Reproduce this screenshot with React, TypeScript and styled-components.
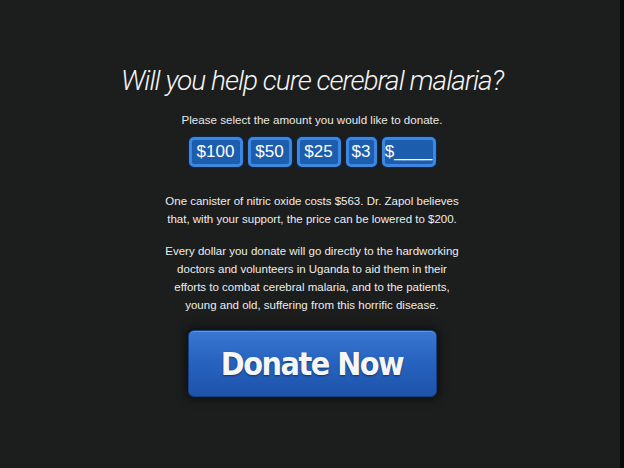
import React from "react";
import styled, { createGlobalStyle } from "styled-components";

const Global = createGlobalStyle`
  html, body { margin: 0; padding: 0; background: #1c1d1d; }
  body { width: 624px; height: 468px; overflow: hidden; }
`;

const Page = styled.div`
  width: 624px;
  height: 468px;
  box-sizing: border-box;
  background: #1c1d1d;
  box-shadow: inset -4px 0 0 #0a0a0a;
  display: flex;
  flex-direction: column;
  align-items: center;
  padding-top: 63px;
  font-family: "Liberation Sans", Arial, sans-serif;
  color: #f2f2f2;
`;

const Title = styled.h1`
  margin: 0;
  font-family: Roboto, "Liberation Sans", sans-serif;
  font-weight: 300;
  font-style: italic;
  font-size: 28px;
  line-height: 36px;
  letter-spacing: -1px;
  color: #f4f4f4;
`;

const Prompt = styled.p`
  margin: 14px 0 0;
  font-size: 11.6px;
  line-height: 14px;
  color: #e8e8e8;
`;

const Amounts = styled.div`
  display: flex;
  gap: 5px;
  margin-top: 10px;
`;

const Amount = styled.button<{ $w: number }>`
  width: ${(p) => p.$w}px;
  height: 30px;
  box-sizing: border-box;
  padding: 0;
  border: 3px solid #3b87e2;
  border-radius: 5px;
  background: #1d5dad;
  box-shadow: 0 0 0 1px #0c264a;
  color: #ffffff;
  font-family: "Liberation Sans", Arial, sans-serif;
  font-size: 17px;
  line-height: 24px;
  text-align: center;
`;

const Body = styled.div`
  margin-top: 25px;
  display: flex;
  flex-direction: column;
  gap: 14px;
  width: 320px;
`;

const Para = styled.p`
  margin: 0;
  text-align: center;
  font-size: 11.5px;
  line-height: 18px;
  color: #ededed;
`;

const Donate = styled.button`
  margin-top: 16px;
  width: 249px;
  height: 67px;
  box-sizing: border-box;
  border: 1px solid #143f85;
  border-radius: 6px;
  background: linear-gradient(#3a78d2 0%, #2764c0 45%, #1d53aa 100%);
  box-shadow: 0 0 10px 2px rgba(0, 0, 0, 0.55), inset 0 1px 0 rgba(140, 180, 240, 0.5);
  color: #f6f6f6;
  font-family: "DejaVu Sans Condensed", "Liberation Sans", sans-serif;
  font-weight: 700;
  font-size: 32px;
  letter-spacing: -1.5px;
  text-shadow: 0 1px 2px rgba(0, 0, 0, 0.45);
  padding: 0;
`;

const amounts = [
  { label: "$100", w: 54 },
  { label: "$50", w: 44 },
  { label: "$25", w: 44 },
  { label: "$3", w: 31 },
  { label: "$____", w: 54 },
];

export default function App() {
  return (
    <>
      <Global />
      <Page>
        <Title>Will you help cure cerebral malaria?</Title>
        <Prompt>Please select the amount you would like to donate.</Prompt>
        <Amounts>
          {amounts.map((a) => (
            <Amount key={a.label} $w={a.w}>
              {a.label}
            </Amount>
          ))}
        </Amounts>
        <Body>
          <Para>
            One canister of nitric oxide costs $563. Dr. Zapol believes
            <br />
            that, with your support, the price can be lowered to $200.
          </Para>
          <Para>
            Every dollar you donate will go directly to the hardworking
            <br />
            doctors and volunteers in Uganda to aid them in their
            <br />
            efforts to combat cerebral malaria, and to the patients,
            <br />
            young and old, suffering from this horrific disease.
          </Para>
        </Body>
        <Donate>Donate Now</Donate>
      </Page>
    </>
  );
}
